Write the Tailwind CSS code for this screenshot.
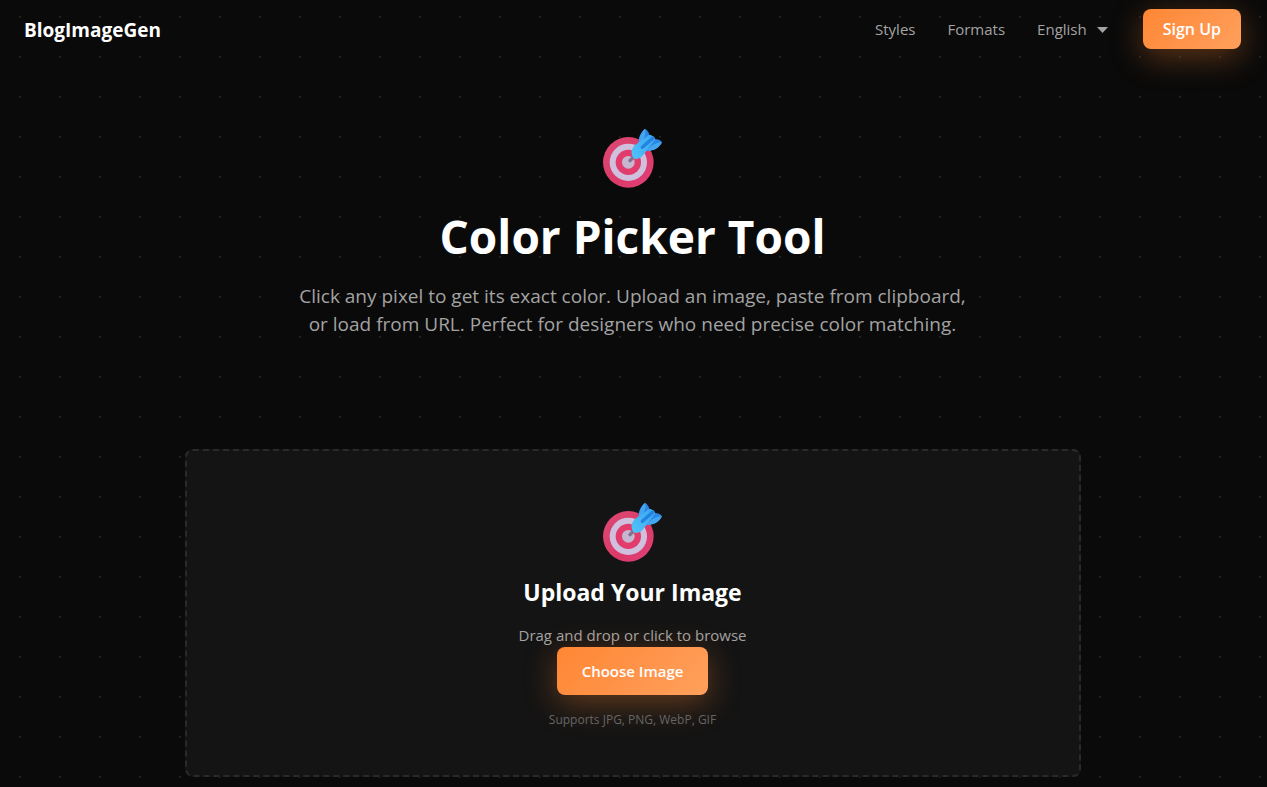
<!DOCTYPE html>
<html lang="en">
<head>
<meta charset="utf-8">
<meta name="viewport" content="width=device-width, initial-scale=1">
<title>Color Picker Tool - BlogImageGen</title>
<script src="https://cdn.jsdelivr.net/npm/@tailwindcss/browser@4"></script>
</head>
<body class="min-h-screen overflow-x-hidden bg-[#0a0a0a] bg-[radial-gradient(circle_at_20px_20px,#1e1e1e_1px,transparent_1px)] bg-[size:40px_40px] bg-[position:0_-3px] font-['Segoe_UI','Open_Sans',sans-serif] text-white">
<svg class="absolute size-0" aria-hidden="true">
  <defs>
    <linearGradient id="rim" x1="0" y1="0" x2="1" y2="1"><stop offset="0" stop-color="#dc4a74"/><stop offset=".6" stop-color="#dc3a68"/><stop offset="1" stop-color="#e2417c"/></linearGradient>
    <linearGradient id="dart" x1="0" y1="1" x2="1" y2="0"><stop offset="0" stop-color="#50c4fa"/><stop offset="1" stop-color="#3aa5f2"/></linearGradient>
    <symbol id="target" viewBox="39 26 180 180">
      <circle cx="115" cy="129" r="76" fill="url(#rim)"/>
      <circle cx="115" cy="129" r="56" fill="#cfc0de"/>
      <circle cx="115" cy="129" r="38" fill="#e23c6c"/>
      <circle cx="115" cy="129" r="19" fill="#c6b6d0"/>
      <path d="M120 124l14-14" stroke="#82718c" stroke-width="10" stroke-linecap="round"/>
      <path d="M147 72c-4-16 6-34 18-44 8 5 13 13 15 25l-10 30z" fill="#2c86e4"/>
      <path d="M147 72c-2-14 6-32 18-44 3 12-1 24-5 34z" fill="#45a6f0"/>
      <path d="M164 92l30-33c9 0 18 3 22 10-9 17-24 26-45 26z" fill="#2c86e4"/>
      <path d="M171 95c8-14 26-26 45-26-9 17-24 26-45 26z" fill="#45a6f0"/>
      <path d="M125 103c-2-10 3-19 10-26l42-30c7-2 18 6 19 13l-32 42c-8 12-16 17-25 17-8 0-13-7-14-16z" fill="url(#dart)"/>
      <path d="M157 84l32-28" stroke="#2383df" stroke-width="10" stroke-linecap="round"/>
    </symbol>
  </defs>
</svg>
<header class="flex h-[58px] items-center justify-between pr-[26px] pl-6">
  <a href="#" class="pt-0.5 text-[19px] leading-7 font-bold">BlogImageGen</a>
  <nav class="flex items-center gap-8 text-[15px] leading-6 text-[#a3a3a3]">
    <a href="#">Styles</a>
    <a href="#">Formats</a>
    <button type="button" class="mr-[3px] flex items-center gap-2.5">English
      <svg class="mt-0.5 h-[6px] w-[11px]" viewBox="0 0 11 6" fill="currentColor" aria-hidden="true"><path d="M0 0h11L5.500 6z"/></svg>
    </button>
    <button type="button" class="h-10 rounded-lg bg-linear-135 from-[#ff8632] to-[#ffa05c] px-5 text-base font-semibold text-white shadow-[0_8px_32px_rgba(255,134,50,0.35)]">Sign Up</button>
  </nav>
</header>
<main class="pr-[26px] pl-6">
  <section class="flex flex-col items-center pt-[70px] text-center">
    <svg class="size-[60px]" role="img" aria-label="Target"><use href="#target"/></svg>
    <h1 class="mt-5 text-[46px] leading-[56px] font-bold">Color Picker Tool</h1>
    <p class="mt-[18px] max-w-[680px] text-[19px] leading-7 text-[#a3a3a3]">Click any pixel to get its exact color. Upload an image, paste from clipboard, or load from URL. Perfect for designers who need precise color matching.</p>
  </section>
  <section class="mx-auto mt-[111px] mb-2.5 flex max-w-4xl flex-col items-center rounded-lg border-2 border-dashed border-[#2a2a2a] bg-[#141414] px-12 pt-[51px] pb-[46px] text-center">
    <svg class="size-[60px]" role="img" aria-label="Target"><use href="#target"/></svg>
    <h2 class="mt-3.5 text-[23px] leading-8 font-bold">Upload Your Image</h2>
    <p class="mt-[15px] text-[15px] leading-6 text-[#a3a3a3]">Drag and drop or click to browse</p>
    <button type="button" class="h-12 rounded-lg bg-linear-135 from-[#ff8632] to-[#ffa05c] px-[25px] text-[15px] font-semibold text-white shadow-[0_8px_32px_rgba(255,134,50,0.35)]">Choose Image</button>
    <p class="mt-4 text-[12px] leading-[18px] text-[#666666]">Supports JPG, PNG, WebP, GIF</p>
  </section>
</main>
</body>
</html>
